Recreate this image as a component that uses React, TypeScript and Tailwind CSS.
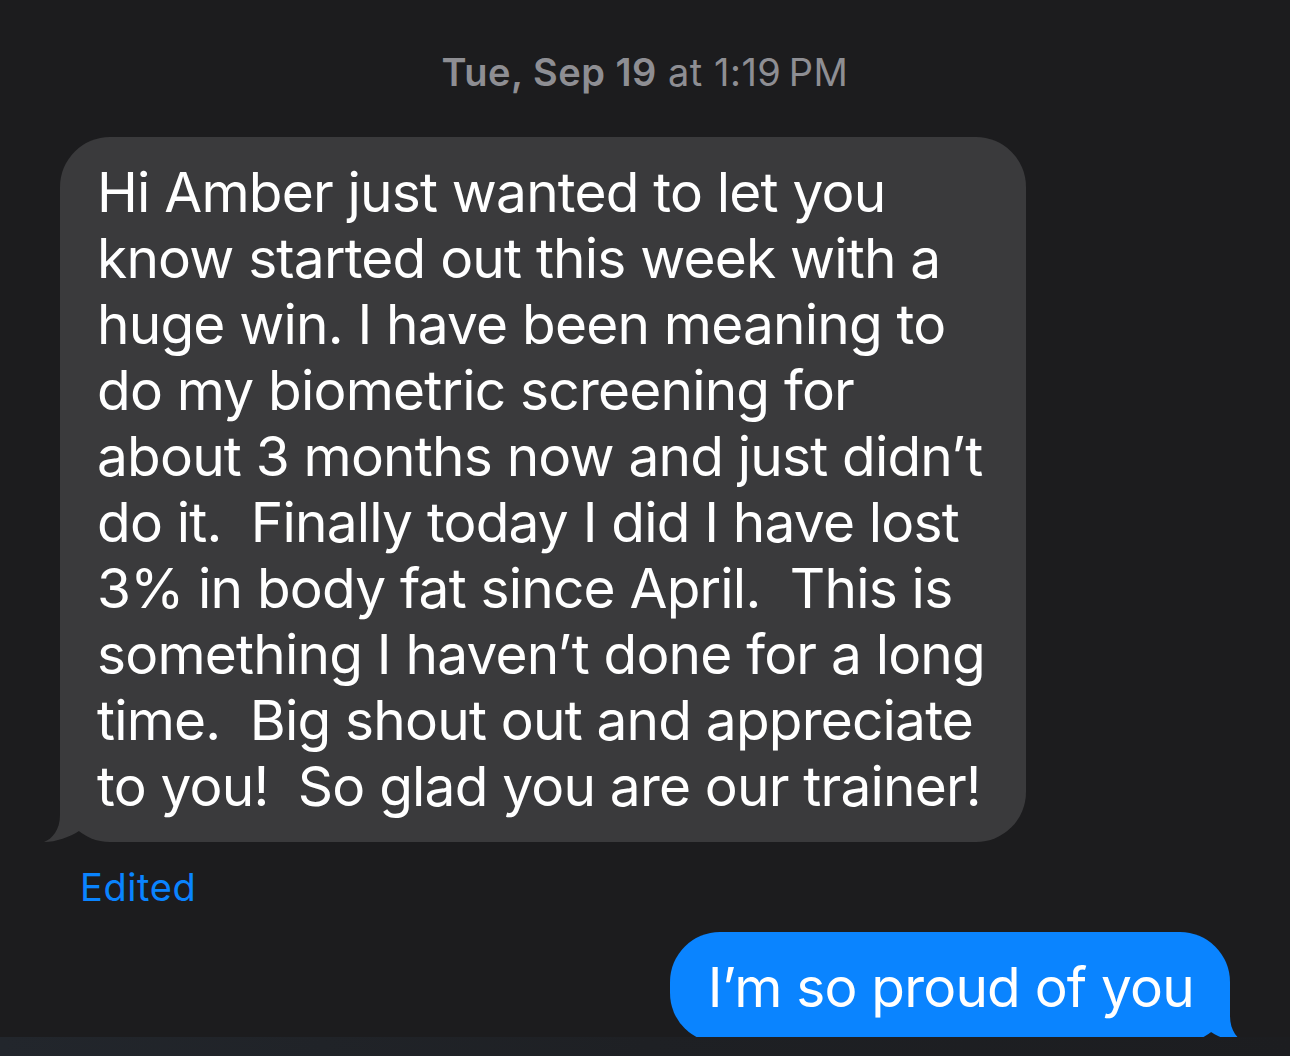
const lines = [
  'Hi Amber just wanted to let you',
  'know started out this week with a',
  'huge win. I have been meaning to',
  'do my biometric screening for',
  'about 3 months now and just didn\u2019t',
  'do it.  Finally today I did I have lost',
  '3% in body fat since April.  This is',
  'something I haven\u2019t done for a long',
  'time.  Big shout out and appreciate',
  'to you!  So glad you are our trainer!',
]

// tail drawn over the bubble's bottom corner
const GrayTail = () => (
  <svg className="absolute left-[-16px] bottom-0 z-20" width="40" height="55" viewBox="0 0 40 55">
    <path d="M16 0 L16 28 C16 43 8 52 0 55 C12 55 26 50 35 44 L35 0 Z" fill="#3a3a3c" />
  </svg>
)

const BlueTail = () => (
  <svg className="absolute right-[-16px] bottom-0 z-20" width="40" height="55" viewBox="0 0 40 55">
    <path d="M24 0 L24 28 C24 43 32 52 40 55 C28 55 14 50 5 44 L5 0 Z" fill="#0a84ff" />
  </svg>
)

export default function App() {
  return (
    <div className="relative w-[1290px] h-[1056px] overflow-hidden bg-[#1c1c1e] font-['Inter',sans-serif] antialiased">
      <div className="pt-[46px] text-center text-[38px] leading-[52px] text-[#8e8e93] tracking-[0.5px]">
        <span className="font-semibold">Tue, Sep 19</span> at 1:19&#8239;PM
      </div>

      <div className="relative mt-[39px] ml-[60px] w-[966px]">
        <div className="rounded-[50px] bg-[#3a3a3c] pl-[37px] pr-[30px] pt-[22px] pb-[23px] text-white text-[55px] leading-[66px] tracking-[-0.8px]">
          {lines.map((l, i) => (
            <div key={i} className="whitespace-pre">{l}</div>
          ))}
        </div>
        <GrayTail />
      </div>

      <div className="ml-[80px] mt-[23px] text-[38px] leading-[44px] tracking-[0.6px] text-[#0a84ff]">Edited</div>

      <div className="flex justify-end pr-[60px] mt-[23px]">
        <div className="relative">
          <div className="rounded-[50px] bg-[#0a84ff] pl-[38px] pr-[36px] pt-[22px] pb-[23px] text-white text-[55px] leading-[66px] tracking-[-0.8px]">
            I&#8217;m so proud of you
          </div>
          <BlueTail />
        </div>
      </div>

      <div className="absolute left-0 right-0 bottom-0 z-30 h-[19px] bg-gradient-to-r from-[#22262c] via-[#1e2024] to-[#1c1d20]" />
    </div>
  )
}
